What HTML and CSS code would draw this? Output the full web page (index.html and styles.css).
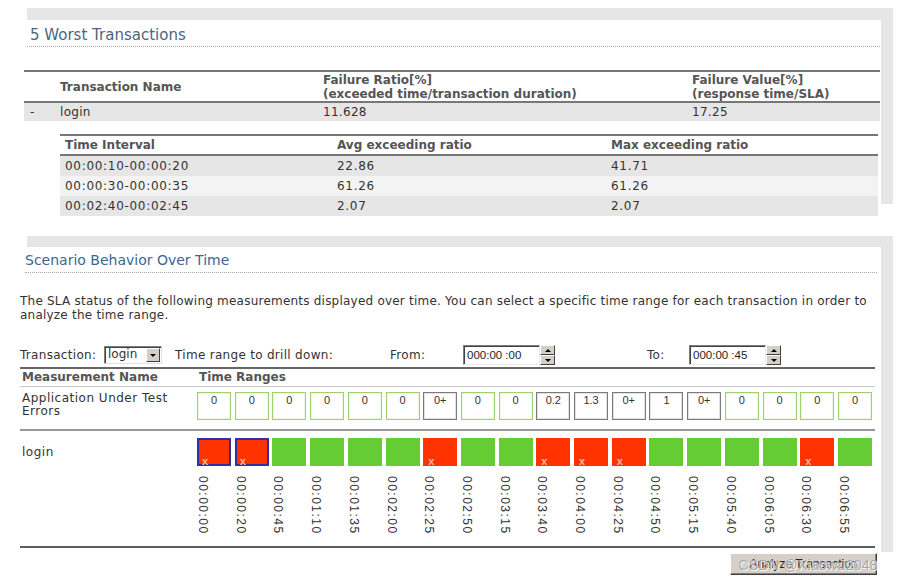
FILE: index.html
```html
<!DOCTYPE html>
<html>
<head>
<meta charset="utf-8">
<link rel="stylesheet" href="styles.css">
</head>
<body>
<div class="page">
  <section class="panel p1">
    <div class="band"></div>
    <div class="panel-row">
      <div class="panel-main">
        <h2 class="title t1">5 Worst Transactions</h2>
        <div class="wt">
          <div class="wt-head">
            <div></div>
            <div>Transaction Name</div>
            <div>Failure Ratio[%]<br>(exceeded time/transaction duration)</div>
            <div>Failure Value[%]<br>(response time/SLA)</div>
          </div>
          <div class="wt-row">
            <div class="dash">-</div>
            <div>login</div>
            <div>11.628</div>
            <div>17.25</div>
          </div>
        </div>
        <div class="sub">
          <div class="sub-head">
            <div>Time Interval</div><div>Avg exceeding ratio</div><div>Max exceeding ratio</div>
          </div>
          <div class="sub-row dark"><div>00:00:10-00:00:20</div><div>22.86</div><div>41.71</div></div>
          <div class="sub-row light"><div>00:00:30-00:00:35</div><div>61.26</div><div>61.26</div></div>
          <div class="sub-row dark"><div>00:02:40-00:02:45</div><div>2.07</div><div>2.07</div></div>
        </div>
      </div>
      <div class="side s1"></div>
    </div>
  </section>

  <section class="panel p2">
    <div class="band b2"></div>
    <div class="panel-row">
      <div class="panel-main">
        <h2 class="title t2">Scenario Behavior Over Time</h2>
        <p class="intro">The SLA status of the following measurements displayed over time. You can select a specific time range for each transaction in order to analyze the time range.</p>
        <div class="controls">
          <span class="lbl lbl-tx">Transaction:</span>
          <span class="select"><span class="select-val">login</span><span class="select-btn"><span class="tri-down"></span></span></span>
          <span class="lbl lbl-range">Time range to drill down:</span>
          <span class="lbl lbl-from">From:</span>
          <span class="tinput">000:00 :00</span>
          <span class="spin"><span class="spin-up"><span class="tri-up"></span></span><span class="spin-dn"><span class="tri-down"></span></span></span>
          <span class="lbl lbl-to">To:</span>
          <span class="tinput">000:00 :45</span>
          <span class="spin"><span class="spin-up"><span class="tri-up"></span></span><span class="spin-dn"><span class="tri-down"></span></span></span>
        </div>
        <div class="mtable">
          <div class="mt-head">
            <div class="mt-name">Measurement Name</div>
            <div class="mt-ranges">Time Ranges</div>
          </div>
          <div class="mt-row aut">
            <div class="mt-name">Application Under Test<br>Errors</div>
            <div class="cells">
              <div class="vbox ok">0</div><div class="vbox ok">0</div><div class="vbox ok">0</div><div class="vbox ok">0</div><div class="vbox ok">0</div><div class="vbox ok">0</div>
              <div class="vbox bad">0+</div><div class="vbox ok">0</div><div class="vbox ok">0</div><div class="vbox bad">0.2</div><div class="vbox bad">1.3</div><div class="vbox bad">0+</div>
              <div class="vbox bad">1</div><div class="vbox bad">0+</div><div class="vbox ok">0</div><div class="vbox ok">0</div><div class="vbox ok">0</div><div class="vbox ok">0</div>
            </div>
          </div>
          <div class="mt-row login">
            <div class="mt-name">login</div>
            <div class="cells">
              <div class="bar red sel"><span class="mark">x</span></div>
              <div class="bar red sel"><span class="mark">x</span></div>
              <div class="bar green"></div><div class="bar green"></div><div class="bar green"></div><div class="bar green"></div>
              <div class="bar red"><span class="mark">x</span></div>
              <div class="bar green"></div><div class="bar green"></div>
              <div class="bar red"><span class="mark">x</span></div>
              <div class="bar red"><span class="mark">x</span></div>
              <div class="bar red"><span class="mark">x</span></div>
              <div class="bar green"></div><div class="bar green"></div><div class="bar green"></div><div class="bar green"></div>
              <div class="bar red"><span class="mark">x</span></div>
              <div class="bar green"></div>
            </div>
          </div>
          <div class="mt-row labels">
            <div class="mt-name"></div>
            <div class="cells">
              <span class="tl">00:00:00</span><span class="tl">00:00:20</span><span class="tl">00:00:45</span><span class="tl">00:01:10</span><span class="tl">00:01:35</span><span class="tl">00:02:00</span>
              <span class="tl">00:02:25</span><span class="tl">00:02:50</span><span class="tl">00:03:15</span><span class="tl">00:03:40</span><span class="tl">00:04:00</span><span class="tl">00:04:25</span>
              <span class="tl">00:04:50</span><span class="tl">00:05:15</span><span class="tl">00:05:40</span><span class="tl">00:06:05</span><span class="tl">00:06:30</span><span class="tl">00:06:55</span>
            </div>
          </div>
        </div>
        <div class="actions">
          <button class="btn">Analyze Transaction</button>
        </div>
      </div>
      <div class="side s2"></div>
    </div>
  </section>
  <div class="watermark">CSDN @Xiaowu2048</div>
</div>
</body>
</html>
```
FILE: styles.css
```css
html, body {
  margin: 0;
  background: #fff;
}
body {
  font-family: "DejaVu Sans", Verdana, sans-serif;
  font-size: 12px;
  color: #333;
}
.page {
  position: relative;
  width: 907px;
  height: 582px;
  padding-top: 8px;
  box-sizing: border-box;
  overflow: hidden;
}
.band {
  margin-left: 27px;
  width: 866px;
  height: 12px;
  background: #e6e6e6;
}
.b2 { height: 11px; }
.panel-row {
  display: flex;
  align-items: flex-start;
}
.panel-main { width: 881px; }
.side {
  width: 12px;
  background: #e6e6e6;
}
.s1 { height: 184px; }
.s2 { height: 305px; }
.p2 { margin-top: 20px; }

.title {
  margin: 0;
  font-weight: normal;
  line-height: 18px;
  border-bottom: 1px dotted #a8a8a8;
}
.t1 {
  font-size: 15px;
  margin: 6px 1px 0 27px;
  padding: 0 0 2px 3px;
  color: #4a6682;
}
.t2 {
  font-size: 14px;
  margin: 4px 4px 0 25px;
  padding: 0 0 3px 0;
  color: #3b6790;
}

/* worst transactions table */
.wt {
  margin: 23px 0 0 24px;
  width: 856px;
}
.wt-head, .wt-row {
  display: grid;
  grid-template-columns: 36px 263px 369px 188px;
}
.wt-head {
  height: 29px;
  align-items: center;
  border-top: 2px solid #777;
  border-bottom: 2px solid #777;
  font-weight: bold;
  color: #555;
  line-height: 14px;
}
.wt-row {
  height: 18px;
  line-height: 18px;
  background: #e6e6e6;
  letter-spacing: 0.3px;
}
.dash { padding-left: 6px; }

.sub {
  margin: 13px 0 0 60px;
  width: 818px;
}
.sub-head, .sub-row {
  display: grid;
  grid-template-columns: 277px 274px 267px;
}
.sub-head > div:first-child, .sub-row > div:first-child { padding-left: 5px; }
.sub-head {
  height: 18px;
  line-height: 18px;
  border-top: 2px solid #777;
  border-bottom: 2px solid #777;
  font-weight: bold;
  color: #555;
}
.sub-row {
  height: 20px;
  line-height: 20px;
  letter-spacing: 0.7px;
}
.sub-row.dark { background: #e6e6e6; }
.sub-row.light { background: #f3f3f3; }

/* scenario section */
.intro {
  margin: 21px 0 0 20px;
  width: 872px;
  line-height: 14px;
  letter-spacing: 0.22px;
}
.controls {
  display: flex;
  align-items: center;
  height: 20px;
  margin: 23px 0 2px 20px;
  letter-spacing: 0.3px;
}
.lbl { white-space: nowrap; }
.lbl-tx { width: 84px; }
.lbl-range { width: 215px; margin-left: 13px; }
.lbl-from { width: 73px; }
.lbl-to { width: 42px; margin-left: 92px; }
.select {
  display: flex;
  width: 58px;
  height: 18px;
  box-sizing: border-box;
  border: 1px solid;
  border-color: #808080 #e0e0e0 #e0e0e0 #808080;
  box-shadow: inset 1px 1px 0 #404040;
  background: #fff;
  letter-spacing: 0;
}
.select-val {
  flex: 1;
  padding-left: 3px;
  line-height: 15px;
}
.select-btn {
  width: 14px;
  margin: 1px 1px 1px 0;
  background: #d4d0c8;
  border: 1px solid;
  border-color: #fff #404040 #404040 #fff;
  box-sizing: border-box;
  display: flex;
  align-items: center;
  justify-content: center;
}
.tri-down {
  width: 0; height: 0;
  border-left: 3px solid transparent;
  border-right: 3px solid transparent;
  border-top: 3px solid #000;
}
.tri-up {
  width: 0; height: 0;
  border-left: 3px solid transparent;
  border-right: 3px solid transparent;
  border-bottom: 3px solid #000;
}
.tinput {
  width: 77px;
  height: 20px;
  box-sizing: border-box;
  border: 1px solid;
  border-color: #808080 #e8e8e8 #e8e8e8 #808080;
  box-shadow: inset 1px 1px 0 #404040;
  font-family: "Liberation Sans", Arial, sans-serif;
  font-size: 11.5px;
  letter-spacing: 0;
  line-height: 18px;
  padding-left: 3px;
  color: #222;
}
.spin {
  display: flex;
  flex-direction: column;
  width: 15px;
  height: 20px;
}
.spin-up, .spin-dn {
  flex: 1;
  background: #d4d0c8;
  border: 1px solid;
  border-color: #fff #404040 #404040 #fff;
  display: flex;
  align-items: center;
  justify-content: center;
}

.mtable {
  margin-left: 20px;
  width: 855px;
  border-top: 2px solid #666;
  border-bottom: 2px solid #5c5c5c;
}
.mt-head, .mt-row {
  display: grid;
  grid-template-columns: 177px 675px;
}
.mt-head {
  height: 17px;
  line-height: 17px;
  border-bottom: 1px solid #c8c8c8;
  font-weight: bold;
  color: #555;
}
.mt-name { padding-left: 2px; }
.mt-row .mt-name { letter-spacing: 0.5px; }
.mt-ranges { padding-left: 2px; }
.cells {
  display: grid;
  grid-template-columns: repeat(18, 1fr);
  column-gap: 3.7px;
}
.mt-row.aut {
  padding: 5px 0 9px;
  border-bottom: 2px solid #999;
  line-height: 13px;
}
.vbox {
  height: 28px;
  box-sizing: border-box;
  border: 1px solid;
  text-align: center;
  font-family: "Liberation Sans", Arial, sans-serif;
  font-size: 11px;
  line-height: 13px;
  padding-top: 1px;
  color: #333;
}
.vbox.ok {
  border-color: #9fd170;
  box-shadow: inset 0 0 0 1px #eef7e4;
}
.vbox.bad {
  border-color: #7a7a7a;
  box-shadow: inset 0 0 0 1px #e2e2e2;
}
.mt-row.login {
  padding-top: 7px;
  align-items: center;
}
.bar {
  position: relative;
  height: 28px;
  box-sizing: border-box;
}
.bar.red { background: #ff3300; }
.bar.green { background: #66cc33; }
.bar.sel { border: 2px solid #2f2fa5; }
.mark {
  position: absolute;
  left: 5px;
  bottom: 0;
  font-family: "Liberation Sans", Arial, sans-serif;
  font-size: 11px;
  font-weight: bold;
  line-height: 10px;
  color: #ffb7a3;
}
.bar.sel .mark { left: 3px; bottom: -2px; }
.mt-row.labels {
  padding: 10px 0 12px;
}
.tl {
  justify-self: start;
  margin-left: 1px;
  writing-mode: vertical-rl;
  font-family: "Liberation Sans", Arial, sans-serif;
  font-size: 12px;
  letter-spacing: 1.5px;
  line-height: 10px;
  height: 58px;
  color: #333;
}
.actions {
  display: flex;
  justify-content: flex-end;
  width: 857px;
  margin: 5px 0 0 20px;
}
.btn {
  width: 147px;
  height: 22px;
  padding: 0;
  background: #d4d0c8;
  border: 1px solid;
  border-color: #fff #404040 #404040 #fff;
  box-shadow: inset -1px -1px 0 #808080;
  font-family: "Liberation Sans", Arial, sans-serif;
  font-size: 12px;
  color: #222;
}
.watermark {
  position: absolute;
  left: 738px;
  top: 557px;
  font-family: "Liberation Sans", Arial, sans-serif;
  font-size: 14.5px;
  color: rgba(110, 110, 110, 0.6);
  text-shadow: 0 0 1px #fff, 1px 1px 0 rgba(255,255,255,0.8);
  white-space: nowrap;
}
```
